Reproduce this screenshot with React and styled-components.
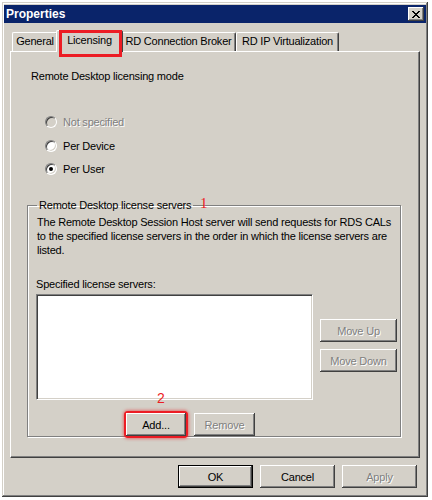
import React from "react";
import styled, { createGlobalStyle, css } from "styled-components";

const GlobalStyle = createGlobalStyle`
  body {
    margin: 0;
    background: #ffffff;
    font-family: "Liberation Sans", Arial, sans-serif;
    font-size: 11px;
    letter-spacing: -0.2px;
    color: #000;
  }
`;

const raised = css`
  box-shadow: inset -1px -1px #404040, inset 1px 1px #ffffff,
    inset -2px -2px #808080, inset 2px 2px #d4d0c8;
`;

const App = () => {
  return (
    <>
      <GlobalStyle />
      <Page>
        <Window>
          <TitleBar>
            <Title>Properties</Title>
            <CloseButton>
              <svg width="8" height="7" viewBox="0 0 8 7">
                <path
                  d="M0 0h2v1h1v1h2V1h1V0h2v1H7v1H6v1H5v1h1v1h1v1h1v1H6V6H5V5H3v1H2v1H0V6h1V5h1V4h1V3H2V2H1V1H0z"
                  fill="#000"
                />
              </svg>
            </CloseButton>
          </TitleBar>

          <Body>
            <TabRow>
              <Tab $w={46}>General</Tab>
              <Tab $w={67} $active>
                Licensing
                <Highlight />
              </Tab>
              <Tab $w={115}>RD Connection Broker</Tab>
              <Tab $w={103}>RD IP Virtualization</Tab>
            </TabRow>

            <Panel>
              <Heading>Remote Desktop licensing mode</Heading>
              <RadioList>
                <RadioRow $disabled>
                  <Radio $disabled />
                  <span>Not specified</span>
                </RadioRow>
                <RadioRow>
                  <Radio />
                  <span>Per Device</span>
                </RadioRow>
                <RadioRow>
                  <Radio $checked />
                  <span>Per User</span>
                </RadioRow>
              </RadioList>

              <GroupBox>
                <Legend>
                  Remote Desktop license servers
                  <Marker $top={-4} $left={163} $serif>
                    1
                  </Marker>
                </Legend>
                <Description>
                  The Remote Desktop Session Host server will send requests for
                  RDS CALs to the specified license servers in the order in which
                  the license servers are listed.
                </Description>
                <ListLabel>Specified license servers:</ListLabel>
                <ListArea>
                  <ListBox />
                  <SideButtons>
                    <Button $w={77} disabled>
                      Move Up
                    </Button>
                    <Button $w={77} disabled>
                      Move Down
                    </Button>
                  </SideButtons>
                </ListArea>
                <ListButtons>
                  <AddWrap>
                    <Marker $top={-23} $left={31}>2</Marker>
                    <Button $w={60}>Add...</Button>
                  </AddWrap>
                  <Button $w={61} disabled>
                    Remove
                  </Button>
                </ListButtons>
              </GroupBox>
            </Panel>

            <Footer>
              <Button $w={75} $default>
                OK
              </Button>
              <Button $w={75}>Cancel</Button>
              <Button $w={75} disabled>
                Apply
              </Button>
            </Footer>
          </Body>
        </Window>
      </Page>
    </>
  );
};

export default App;

const Page = styled.div`
  padding: 2px 0 0 2px;
  width: 432px;
  height: 500px;
  box-sizing: border-box;
`;

const Window = styled.div`
  width: 426px;
  height: 495px;
  box-sizing: border-box;
  padding: 3px 2px 2px 2px;
  background: #d4d0c8;
  display: flex;
  flex-direction: column;
  box-shadow: inset -1px -1px #404040, inset 1px 1px #d4d0c8,
    inset -2px -2px #808080, inset 2px 2px #ffffff;
`;

const TitleBar = styled.div`
  height: 18px;
  background: #0a246a;
  display: flex;
  align-items: center;
  justify-content: space-between;
  padding: 0 2px 0 2px;
`;

const Title = styled.div`
  color: #fff;
  font-weight: bold;
  font-size: 12px;
  letter-spacing: 0;
`;

const CloseButton = styled.div`
  width: 16px;
  height: 14px;
  background: #d4d0c8;
  display: flex;
  align-items: center;
  justify-content: center;
  ${raised}
`;

const Body = styled.div`
  flex: 1;
  display: flex;
  flex-direction: column;
  padding: 6px 6px 0 6px;
`;

const TabRow = styled.div`
  display: flex;
  align-items: flex-end;
  height: 22px;
  padding-left: 2px;
  position: relative;
  z-index: 1;
`;

const Tab = styled.div`
  position: relative;
  width: ${(p) => p.$w}px;
  height: ${(p) => (p.$active ? 22 : 19)}px;
  box-sizing: border-box;
  margin: ${(p) => (p.$active ? "0 -2px -1px" : "0")};
  padding-top: ${(p) => (p.$active ? 3 : 2)}px;
  text-align: center;
  background: #d4d0c8;
  border-left: 1px solid #ffffff;
  border-top: 1px solid #ffffff;
  border-right: 1px solid #404040;
  border-radius: 2px 2px 0 0;
  box-shadow: inset -1px 0 #808080;
  white-space: nowrap;
  z-index: ${(p) => (p.$active ? 2 : 0)};
`;

const Highlight = styled.div`
  position: absolute;
  left: 2px;
  top: -1px;
  width: 63px;
  height: 27px;
  box-sizing: border-box;
  border: 3px solid #ec1c24;
`;

const Panel = styled.div`
  height: 407px;
  box-sizing: border-box;
  padding: 17px 18px 0 16px;
  border-top: 1px solid #ffffff;
  border-left: 1px solid #ffffff;
  border-right: 1px solid #404040;
  border-bottom: 1px solid #404040;
  box-shadow: inset -1px -1px #808080;
  display: flex;
  flex-direction: column;
`;

const Heading = styled.div`
  padding-left: 4px;
  line-height: 14px;
`;

const RadioList = styled.div`
  display: flex;
  flex-direction: column;
  gap: 9.5px;
  margin-top: 32px;
  padding-left: 18px;
`;

const RadioRow = styled.div`
  display: flex;
  align-items: center;
  gap: 6px;
  height: 14px;
  color: ${(p) => (p.$disabled ? "#808080" : "#000")};
  text-shadow: ${(p) => (p.$disabled ? "1px 1px #ffffff" : "none")};
`;

const Radio = styled.div`
  width: 12px;
  height: 12px;
  border-radius: 50%;
  box-sizing: border-box;
  background: ${(p) => (p.$disabled ? "#d4d0c8" : "#ffffff")};
  border: 1px solid;
  border-color: #808080 #ffffff #ffffff #808080;
  box-shadow: inset 1px 1px #404040, inset -1px -1px #d4d0c8;
  display: flex;
  align-items: center;
  justify-content: center;

  &::after {
    content: "";
    display: ${(p) => (p.$checked ? "block" : "none")};
    width: 4px;
    height: 4px;
    border-radius: 50%;
    background: #000;
  }
`;

const GroupBox = styled.fieldset`
  margin: 23px 0 0 0;
  padding: 0 0 0 8px;
  height: 238px;
  box-sizing: border-box;
  border: 1px solid #808080;
  box-shadow: 1px 1px #ffffff, inset 1px 1px #ffffff;
  min-width: 0;
`;

const Legend = styled.legend`
  position: relative;
  padding: 0 2px;
  margin-left: 1px;
  line-height: 12px;
`;

const Marker = styled.span`
  position: absolute;
  left: ${(p) => p.$left}px;
  top: ${(p) => p.$top}px;
  color: #ec1c24;
  letter-spacing: 0;
  font-family: ${(p) =>
    p.$serif ? '"Liberation Serif", serif' : '"Liberation Sans", sans-serif'};
  font-size: ${(p) => (p.$serif ? 15 : 14)}px;
  line-height: 16px;
`;

const Description = styled.div`
  width: 360px;
  line-height: 14px;
  margin-top: 4px;
  padding-left: 1px;
`;

const ListLabel = styled.div`
  margin-top: 20px;
  line-height: 14px;
`;

const ListArea = styled.div`
  display: flex;
  align-items: flex-start;
  gap: 7px;
  margin-top: 3px;
`;

const ListBox = styled.div`
  width: 277px;
  height: 106px;
  box-sizing: border-box;
  background: #ffffff;
  border: 1px solid;
  border-color: #808080 #ffffff #ffffff #808080;
  box-shadow: inset 1px 1px #404040, inset -1px -1px #d4d0c8;
`;

const SideButtons = styled.div`
  display: flex;
  flex-direction: column;
  gap: 7px;
  margin-top: 25px;
`;

const ListButtons = styled.div`
  display: flex;
  gap: 8px;
  margin: 13px 0 0 90px;
`;

const AddWrap = styled.div`
  position: relative;
  border-radius: 2px;
  box-shadow: 0 0 0 2px #ec1c24, 0 0 3px 3px rgba(236, 28, 36, 0.5);
`;

const Button = styled.button`
  width: ${(p) => p.$w}px;
  height: 23px;
  padding: 0;
  border: none;
  background: #d4d0c8;
  font-family: "Liberation Sans", Arial, sans-serif;
  font-size: 11px;
  letter-spacing: -0.2px;
  color: #000;
  display: block;
  ${raised}

  &:disabled {
    color: #808080;
    text-shadow: 1px 1px #ffffff;
  }

  ${(p) =>
    p.$default &&
    css`
      box-shadow: inset 0 0 0 1px #000, inset -2px -2px #404040,
        inset 2px 2px #ffffff, inset -3px -3px #808080;
    `}
`;

const Footer = styled.div`
  display: flex;
  justify-content: flex-end;
  gap: 7px;
  padding: 7px 3px 0 0;
`;
